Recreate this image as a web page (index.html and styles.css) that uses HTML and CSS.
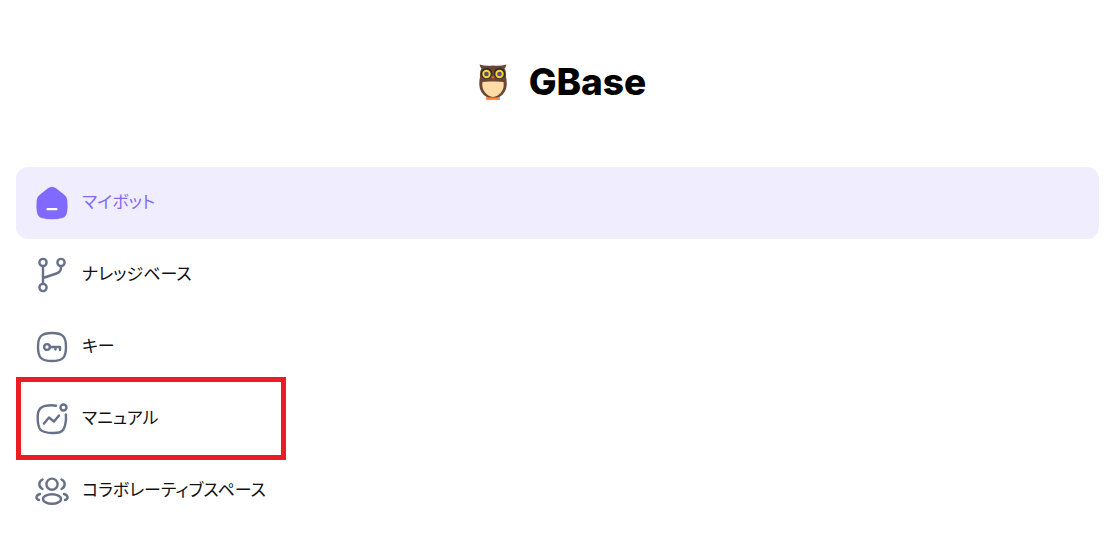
FILE: index.html
```html
<!DOCTYPE html>
<html lang="ja">
<head>
<meta charset="utf-8">
<meta name="viewport" content="width=device-width, initial-scale=1">
<title>GBase</title>
<link rel="stylesheet" href="styles.css">
</head>
<body>
<header class="brand">
  <svg class="brand-logo" viewBox="0 0 28 36" aria-hidden="true">
    <rect x="7" y="31" width="14" height="5" rx="1" fill="#ff8a3c"/>
    <path d="M0.500 0.500Q7 2.500 14 1.500Q21 2.500 27.500 0.500Q27 3 25.500 4.500Q27.500 7 27 13Q28.500 20 27 25Q24.500 32 18 33.500H10Q3.500 32 1 25Q-0.500 20 1 13Q0.500 7 2.500 4.500Q1 3 0.500 0.500Z" fill="#6b4636"/>
    <path d="M3.500 18Q8 17.200 14 17.500Q20 17.200 24.500 18Q25.500 24 22 28.500Q18.500 32.500 14 33Q9.500 32.500 6 28.500Q2.500 24 3.500 18Z" fill="#ffdca6"/>
    <circle cx="7.500" cy="9.500" r="5.700" fill="#352c2b"/>
    <circle cx="20.500" cy="9.500" r="5.700" fill="#352c2b"/>
    <circle cx="7.500" cy="10" r="4.200" fill="#f4d82c"/>
    <circle cx="20.500" cy="10" r="4.200" fill="#f4d82c"/>
    <circle cx="7.500" cy="10" r="2.300" fill="#62487c"/>
    <circle cx="20.500" cy="10" r="2.300" fill="#62487c"/>
    <path d="M12 12.500H16L14 15Z" fill="#f26b21"/>
  </svg>
  <span class="brand-name">GBase</span>
</header>
<nav class="menu">
  <a class="item active" href="#bots" aria-current="page">
    <svg class="icon" viewBox="0 0 36 36" aria-hidden="true">
      <path d="M18 1.700Q19.800 1.700 22 3.300L30 9.500Q33 11.800 33.300 15Q34 22 33 27.500Q32.200 31.800 28.500 33Q23.500 34.200 18 34.200T7.500 33Q3.800 31.800 3 27.500Q2 22 2.700 15Q3 11.800 6 9.500L14 3.300Q16.200 1.700 18 1.700Z" fill="currentColor"/>
      <path d="M13.500 24.200H22.500" fill="none" stroke="#fff" stroke-width="2.200" stroke-linecap="round"/>
    </svg>
    <span class="label">マイボット</span>
  </a>
  <a class="item" href="#knowledge">
    <svg class="icon line" viewBox="0 0 36 36" aria-hidden="true">
      <circle cx="9" cy="5.500" r="3.600"/><circle cx="27" cy="5.500" r="3.600"/><circle cx="9" cy="30.500" r="3.600"/>
      <path d="M9 9V27M27 9V10.500Q27 15 22.500 16.500L9 21"/>
    </svg>
    <span class="label">ナレッジベース</span>
  </a>
  <a class="item" href="#keys">
    <svg class="icon line" viewBox="0 0 36 36" aria-hidden="true">
      <path d="M18 4Q26 4 29 7T32 18T29 29T18 32T7 29T4 18T7 7T18 4Z"/>
      <circle cx="13" cy="18" r="2.900"/><path d="M16 18H26V21M21.500 18V20.500"/>
    </svg>
    <span class="label">キー</span>
  </a>
  <a class="item marked" href="#manual">
    <svg class="icon line" viewBox="0 0 36 36" aria-hidden="true">
      <path d="M22 4.700Q20 4.300 18 4.300Q10 4.300 6.700 7T3.700 18T6.700 29T18 32T29 29T32 18Q32 15.500 31.800 13.500"/>
      <circle cx="29.500" cy="6.500" r="3"/><path d="M10 22.500L15 16.500L20 20.500L25 14.500"/>
    </svg>
    <span class="label">マニュアル</span>
  </a>
  <a class="item" href="#spaces">
    <svg class="icon line" viewBox="0 0 36 36" aria-hidden="true">
      <circle cx="18" cy="11.200" r="5.600"/><ellipse cx="18" cy="26" rx="9" ry="4.700"/>
      <path d="M8.500 6.500Q5.300 8 5.300 11.200T8.500 16M27.500 6.500Q30.700 8 30.700 11.200T27.500 16M6 21Q2.500 22 2.500 24.200T5 27M30 21Q33.500 22 33.500 24.200T31 27"/>
    </svg>
    <span class="label">コラボレーティブスペース</span>
  </a>
</nav>
</body>
</html>
```
FILE: styles.css
```css
* {
  box-sizing: border-box;
}

body {
  margin: 0;
  padding: 0 17px 0 16px;
  background: #fff;
  color: #111;
  font-family: "Noto Sans CJK JP", sans-serif;
}

.brand {
  display: flex;
  align-items: center;
  justify-content: center;
  gap: 22px;
  padding: 58px 0 61px 10px;
}

.brand-logo {
  width: 28px;
  height: 36px;
}

.brand-name {
  color: #000;
  font-family: Inter, sans-serif;
  font-size: 37px;
  font-weight: 800;
  line-height: 48px;
}

.menu {
  display: flex;
  flex-direction: column;
}

.item {
  position: relative;
  display: flex;
  align-items: center;
  gap: 12px;
  height: 72px;
  padding: 0 18px;
  border-radius: 12px;
  color: inherit;
  font-size: 17px;
  line-height: 28px;
  font-feature-settings: "palt";
  text-decoration: none;
}

.label {
  padding-bottom: 4px;
}

.active {
  background: #f0edff;
  color: #7f69ff;
}

.marked::after {
  content: "";
  position: absolute;
  top: -6px;
  left: 0;
  box-sizing: border-box;
  width: 270px;
  height: 83px;
  border: 5px solid #ed1c24;
}

.icon {
  flex: none;
  width: 36px;
  height: 36px;
}

.line {
  fill: none;
  stroke: #677189;
  stroke-width: 2.4;
  stroke-linecap: round;
  stroke-linejoin: round;
}
```
